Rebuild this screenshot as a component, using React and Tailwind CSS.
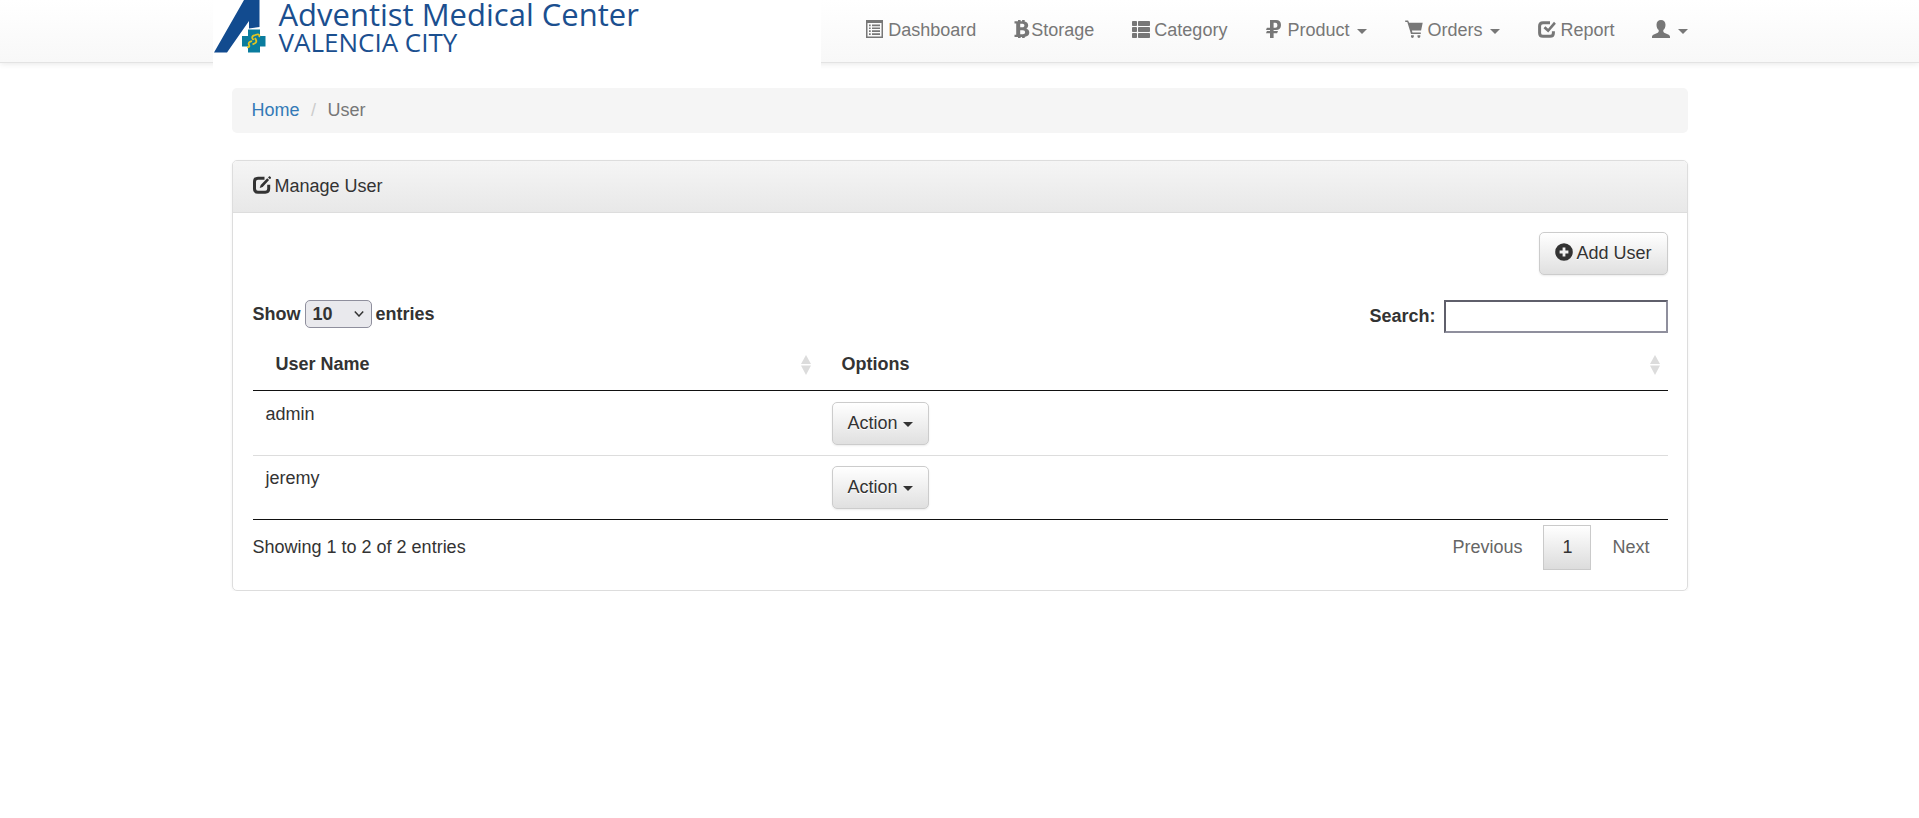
import React from "react";

const FONT = "font-['Liberation_Sans',Arial,sans-serif]";

function Glyph({ children }) {
  return (
    <svg
      viewBox="0 0 18 18"
      className="-mr-px inline-block h-[18px] w-[18px] align-[-2px]"
      fill="currentColor"
      aria-hidden="true"
    >
      {children}
    </svg>
  );
}

const ListAltIcon = () => (
  <Glyph>
    <path fillRule="evenodd" d="M0 0h17v18H0zM1.500 3v13.500h14V3z" />
    <path d="M3 4.500h1.700v1.700H3zM3 7.400h1.700v1.700H3zM3 10.300h1.700V12H3zM3 13.200h1.700v1.700H3zM6 4.500h8v1.700H6zM6 7.400h8v1.700H6zM6 10.300h8V12H6zM6 13.200h8v1.700H6z" />
  </Glyph>
);

const BitcoinIcon = () => (
  <Glyph>
    <path
      fillRule="evenodd"
      d="M.5 1.200H4V0h2.600v1.200h1.500V0h2.600v1.400c2 .4 3.500 1.700 3.500 3.800 0 1.600-.7 2.700-1.900 3.400 1.900.7 3 2.100 3 4 0 2.500-1.700 4-4.600 4.300V18H8.100v-1.100H6.600V18H4v-1.100H.5v-2.200h1.700V3.500H.5zM6.200 3.700v3.600h2.200c1.300 0 2-.7 2-1.800s-.7-1.800-2-1.800zM6.200 10.200v4.100h2.700c1.400 0 2.200-.8 2.200-2s-.8-2.100-2.200-2.100z"
    />
  </Glyph>
);

const ThListIcon = () => (
  <Glyph>
    <rect x="0" y="1" width="5" height="5" rx=".8" />
    <rect x="0" y="7" width="5" height="5" rx=".8" />
    <rect x="0" y="13" width="5" height="5" rx=".8" />
    <rect x="6" y="1" width="12" height="5" rx=".8" />
    <rect x="6" y="7" width="12" height="5" rx=".8" />
    <rect x="6" y="13" width="12" height="5" rx=".8" />
  </Glyph>
);

const RubleIcon = () => (
  <Glyph>
    <path
      fillRule="evenodd"
      d="M5 0h6c3.200 0 5 1.700 5 4.900s-1.800 5-5 5H8.600v1.200H13l-.9 2.200H8.600V18H5v-4.700H1l.9-2.200H5V9.900H1l.9-2.200H5zM8.600 2.700v5h1.600c1.500 0 2.200-.8 2.200-2.500s-.7-2.500-2.200-2.500z"
    />
  </Glyph>
);

const CartIcon = () => (
  <Glyph>
    <path d="M.2.4h2.900l1 2.300h13.600l-1.600 7.900H6.900l.5 1.800h8.400v1.700H6L2.300 2H.2z" />
    <path d="M6 15.200h2.800v1.400c0 .8-.6 1.400-1.400 1.400S6 17.400 6 16.600zM12.500 15.200h2.800v1.400c0 .8-.6 1.400-1.400 1.400s-1.400-.6-1.400-1.400z" />
  </Glyph>
);

const CheckIcon = () => (
  <Glyph>
    <path
      d="M12 2.700H5c-2.200 0-3.400 1.200-3.400 3.400v6.800c0 2.200 1.200 3.400 3.400 3.400h7c2.200 0 3.400-1.200 3.400-3.400v-1.700"
      fill="none"
      stroke="currentColor"
      strokeWidth="3"
    />
    <path d="M5.500 8.200l1.900-1.900 2.700 2.500L16 1.800l1.900 1.900-7.700 8.900z" />
  </Glyph>
);

const UserIcon = () => (
  <Glyph>
    <path d="M9 0c2.700 0 4.500 1.900 4.500 4.700 0 2.300-.9 4.300-2.200 5.400v1.200c0 .7.3 1.100.9 1.400l4.500 2c.9.500 1.300 1.200 1.300 2.300v1H0v-1c0-1.100.4-1.800 1.300-2.300l4.500-2c.6-.3.9-.7.9-1.400v-1.200C5.400 9 4.500 7 4.500 4.700 4.500 1.900 6.300 0 9 0z" />
  </Glyph>
);

const EditIcon = () => (
  <Glyph>
    <path
      d="M11.500 2.300H5c-2.200 0-3.500 1.200-3.500 3.400v7.100c0 2.200 1.300 3.400 3.500 3.400h7.300c2.200 0 3.400-1.200 3.400-3.400V8.800"
      fill="none"
      stroke="currentColor"
      strokeWidth="3"
    />
    <path d="M14.200 2.200l1.900 1.900-6.400 6.800-3 1 1-3zM15 1.400l1-1c.3-.3.800-.3 1.100 0l.8.8c.3.300.3.800 0 1.100l-1 1z" />
  </Glyph>
);

const PlusSignIcon = () => (
  <Glyph>
    <path
      fillRule="evenodd"
      d="M9 .2a8.800 8.800 0 1 1 0 17.600A8.800 8.800 0 0 1 9 .2zM7.600 4.600v3h-3v2.800h3v3h2.800v-3h3V7.600h-3v-3z"
    />
  </Glyph>
);

function Caret() {
  return (
    <span className="inline-block border-x-[5px] border-t-[5px] border-x-transparent border-t-current align-middle" />
  );
}

function SortIcon() {
  return (
    <svg viewBox="0 0 12 20" className="h-5 w-3 fill-[#dcdcdc]" aria-hidden="true">
      <path d="M6 0l5 9H1zM6 20l5-9.500H1z" />
    </svg>
  );
}

function Logo() {
  return (
    <a
      href="#home"
      className="-mb-[11px] flex h-[73px] w-[608px] shrink-0 items-start gap-[13px] bg-white font-['Open_Sans','Noto_Sans',sans-serif] text-[#1b4f8f]"
    >
      <svg viewBox="0 0 53 53" className="h-[53px] w-[53px] shrink-0" aria-hidden="true">
        <path d="M1 52.500L31 0h15.500v27L36 28.500V21L14 52.500z" fill="#124b8f" />
        <path d="M35 29.500h12V36h5.500v10.500H47v6H35v-6h-6V36h6z" fill="#0a7c9e" />
        <path
          d="M40.500 40l-1-1.500c-.8-1.500.2-2.700 1.500-3l3-1c2-.5 3 1 2 2.500M42 38l1 2c.8 1.600 0 3-1.500 3.500l-2 .8M39 41l-2 .8c-1.800.8-1.500 2.500-.8 3.500.6 1.200-.4 2-2 2"
          fill="none"
          stroke="#e3c520"
          strokeWidth="1.800"
        />
      </svg>
      <span className="flex flex-col whitespace-nowrap">
        <span className="text-[31px] leading-7">Adventist Medical Center</span>
        <span className="text-[26px] leading-7">VALENCIA CITY</span>
      </span>
    </a>
  );
}

const navItems = [
  { label: " Dashboard", icon: ListAltIcon },
  { label: "Storage", icon: BitcoinIcon },
  { label: " Category", icon: ThListIcon },
  { label: " Product ", icon: RubleIcon, menu: true },
  { label: " Orders ", icon: CartIcon, menu: true },
  { label: " Report", icon: CheckIcon },
  { label: " ", name: "Account", icon: UserIcon, menu: true },
];

const buttonClass =
  "rounded-[5px] border border-[#ccc] bg-linear-to-b from-white to-[#e0e0e0] px-[15px] py-2 leading-[25px] text-[#333] shadow-[0_1px_2px_rgba(0,0,0,0.08)] [text-shadow:0_1px_0_#fff]";

const cellClass =
  "border-t border-[#ddd] px-[13px] py-[10px] align-top group-first:border-transparent";

const users = ["admin", "jeremy"];

export default function App() {
  return (
    <div className={`${FONT} text-[18px] leading-[25px] text-[#333]`}>
      <header className="border-b border-[#e3e3e3] bg-linear-to-b from-white to-[#f8f8f8] shadow-[0_1px_6px_rgba(0,0,0,0.09)]">
        <div className="mx-auto flex max-w-[1494px] justify-between">
          <Logo />
          <nav>
            <ul className="flex">
              {navItems.map(({ label, name, icon: Icon, menu }) => (
                <li key={name || label}>
                  <a
                    href="#menu"
                    aria-label={name}
                    className="block whitespace-pre px-[19px] pt-[18px] pb-[19px] text-[#777]"
                  >
                    <Icon />
                    {label}
                    {menu && (
                      <span className="ml-[3px]">
                        <Caret />
                      </span>
                    )}
                  </a>
                </li>
              ))}
            </ul>
          </nav>
        </div>
      </header>

      <main className="mx-auto mt-[25px] max-w-[1456px]">
        <nav aria-label="Breadcrumb" className="rounded-[5px] bg-[#f5f5f5] px-5 py-[10px]">
          <ol className="flex">
            <li>
              <a href="#home" className="text-[#337ab7]">
                Home
              </a>
            </li>
            <li className="flex text-[#777]">
              <span className="w-7 text-center text-[#ccc]">/</span>
              User
            </li>
          </ol>
        </nav>

        <section className="mt-[27px] rounded-[5px] border border-[#ddd] shadow-[0_1px_3px_rgba(0,0,0,0.06)]">
          <h1 className="rounded-t-[4px] border-b border-[#ddd] bg-linear-to-b from-[#f5f5f5] to-[#e8e8e8] px-5 py-[13px]">
            <EditIcon /> Manage User
          </h1>

          <div className="pt-[19px] pr-[19px] pb-5 pl-5">
            <div className="flex justify-end">
              <button type="button" className={buttonClass}>
                <PlusSignIcon /> Add User
              </button>
            </div>

            <div className="mt-[25px] flex items-start justify-between font-bold">
              <label className="flex items-center gap-1">
                Show
                <span className="grid items-center">
                  <select
                    defaultValue="10"
                    className="col-start-1 row-start-1 h-7 w-[67px] appearance-none rounded-[5px] border border-[#8f8f9d] bg-[#e9e9ed] pl-[7px] leading-[25px]"
                  >
                    <option>10</option>
                    <option>25</option>
                    <option>50</option>
                    <option>100</option>
                  </select>
                  <svg
                    viewBox="0 0 10 6"
                    className="pointer-events-none col-start-1 row-start-1 mr-2 h-[6px] w-[10px] justify-self-end"
                    fill="none"
                    stroke="#333"
                    strokeWidth="1.500"
                    aria-hidden="true"
                  >
                    <path d="M.8.6L5 5 9.200.6" />
                  </svg>
                </span>
                entries
              </label>
              <label className="flex items-center gap-2">
                Search:
                <input
                  type="search"
                  className="h-[33px] w-56 border-2 border-t-[#5f5f6b] border-r-[#8f8f9d] border-b-[#8f8f9d] border-l-[#5f5f6b] bg-white px-1"
                />
              </label>
            </div>

            <table className="mt-[6px] w-full table-fixed border-separate border-spacing-0 border-b border-[#111]">
              <thead>
                <tr className="text-left">
                  <th className="w-2/5 border-b border-[#111] py-[13px] pr-[7px] pl-[23px]">
                    <span className="flex items-center justify-between">
                      User Name
                      <SortIcon />
                    </span>
                  </th>
                  <th className="border-b border-[#111] py-[13px] pr-[7px] pl-[23px]">
                    <span className="flex items-center justify-between">
                      Options
                      <SortIcon />
                    </span>
                  </th>
                </tr>
              </thead>
              <tbody>
                {users.map((user) => (
                  <tr key={user} className="group">
                    <td className={cellClass}>{user}</td>
                    <td className={cellClass}>
                      <button type="button" className={buttonClass}>
                        Action <Caret />
                      </button>
                    </td>
                  </tr>
                ))}
              </tbody>
            </table>

            <div className="mt-[5px] flex items-center justify-between">
              <p>Showing 1 to 2 of 2 entries</p>
              <div className="flex gap-[3px]">
                <button type="button" className="border border-transparent px-[17px] py-[9px] text-[#666]">
                  Previous
                </button>
                <button
                  type="button"
                  className="border border-[#cacaca] bg-linear-to-b from-white to-[#dcdcdc] px-[18px] py-[9px]"
                >
                  1
                </button>
                <button type="button" className="border border-transparent px-[17px] py-[9px] text-[#666]">
                  Next
                </button>
              </div>
            </div>
          </div>
        </section>
      </main>
    </div>
  );
}
